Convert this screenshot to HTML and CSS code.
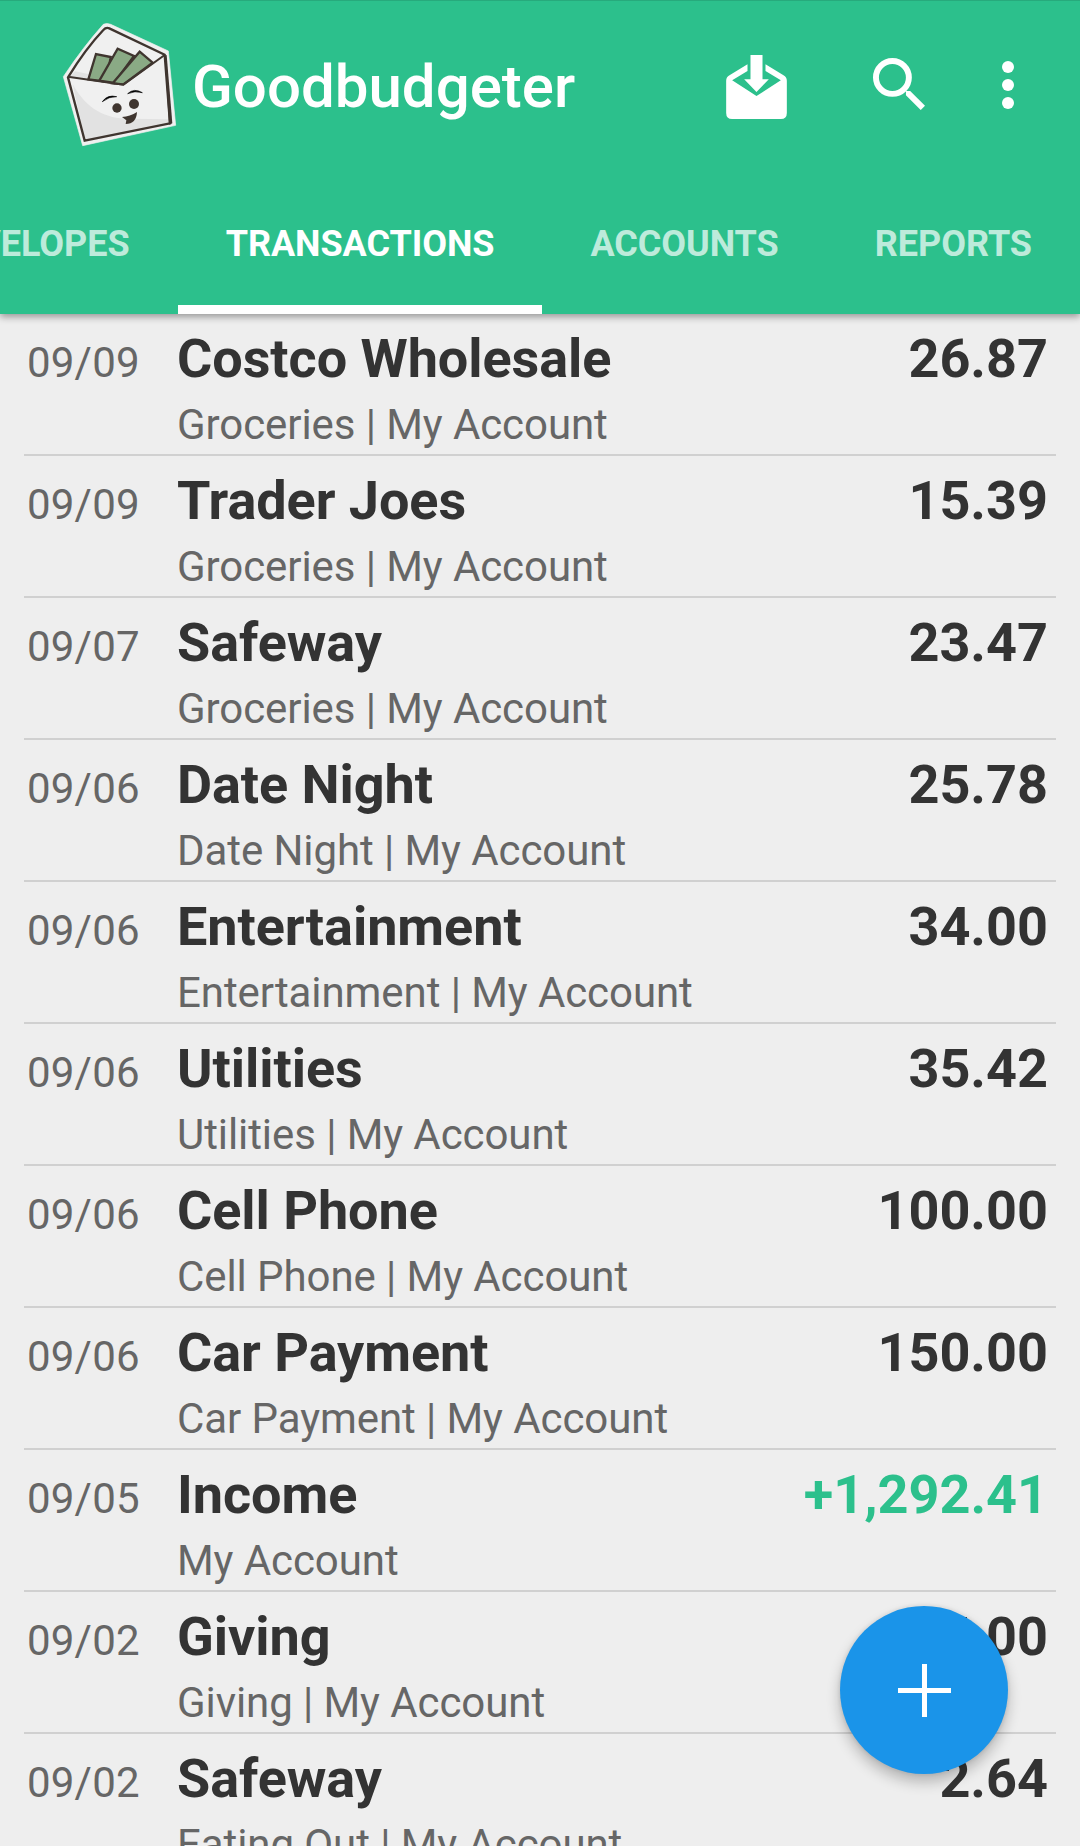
FILE: index.html
```html
<!DOCTYPE html>
<html lang="en">
<head>
  <meta charset="UTF-8">
  <title>Goodbudgeter</title>
  <link rel="stylesheet" href="styles.css">
</head>
<body>
  <header class="header">
    <div class="toolbar">
      <svg class="logo" viewBox="0 0 420 450">
        <path d="M160 43Q170 38 182 43L355 123L377 346L98 407L40 200Q100 110 160 43Z" fill="#f0f0f0" stroke="#f0f0f0" stroke-width="2"/>
        <path d="M75 184L115 192L112 206L58 202Z" fill="#e2e2e2"/>
        <path d="M68 222C110 300 170 326 235 326L360 328L360 340L105 390Z" fill="#e2e2e2"/>
        <g fill="#8aaa85" stroke="#3f352f" stroke-width="7">
          <path d="M115 208L138 132L182 141L170 215Z"/>
          <path d="M148 212L203 116L252 138L193 219Z"/>
          <path d="M188 220L269 125L308 158L220 223Z"/>
        </g>
        <path d="M54 200L220 224L344 135" fill="none" stroke="#3f352f" stroke-width="6"/>
        <path d="M54 202Q107 116 160 60Q168 51 178 55L344 134L360 340L104 392Z" fill="none" stroke="#3f352f" stroke-width="7"/>
        <path d="M344 137L350 135L367 340L357 344Z" fill="#3f352f"/>
        <path d="M157 275Q172 253 200 260Q177 259 157 275ZM233 251Q252 233 277 248Q255 241 233 251Z" fill="#000" stroke="#000" stroke-width="2"/>
        <circle cx="201" cy="294" r="14" fill="#3f352f"/>
        <circle cx="252" cy="282" r="15" fill="#3f352f"/>
        <path d="M216 321Q240 320 261 306Q259 342 227 342L229 331Z" fill="#3f352f"/>
      </svg>
      <h1>Goodbudgeter</h1>
      <svg class="icon-inbox" viewBox="0 0 182 192">
        <path fill="#fff" d="M73 0H109V73H128L91 111L54 73H73Z"/>
        <path fill="#fff" fill-rule="evenodd" d="M64 28L10 61Q0 67 0 77V174Q0 192 18 192H164Q182 192 182 174V77Q182 67 172 61L118 28V48L164 76L91 123L18 76L64 48Z"/>
      </svg>
      <svg class="icon-search" viewBox="0 0 158 158">
        <circle cx="59" cy="59" r="50" fill="none" stroke="#fff" stroke-width="18"/>
        <path d="M100 100H113L158 145L145 158L100 113Z" fill="#fff"/>
      </svg>
      <svg class="icon-more" viewBox="0 0 12 48">
        <circle cx="6" cy="6" r="6" fill="#fff"/>
        <circle cx="6" cy="24" r="6" fill="#fff"/>
        <circle cx="6" cy="42" r="6" fill="#fff"/>
      </svg>
    </div>
    <nav class="tabs">
      <a class="tab">ENVELOPES</a>
      <a class="tab active">TRANSACTIONS</a>
      <a class="tab">ACCOUNTS</a>
      <a class="tab">REPORTS</a>
    </nav>
  </header>

  <main class="list">
    <div class="row">
      <span class="date">09/09</span>
      <div class="info"><h2>Costco Wholesale</h2><p>Groceries | My Account</p></div>
      <span class="amount">26.87</span>
    </div>
    <div class="row">
      <span class="date">09/09</span>
      <div class="info"><h2>Trader Joes</h2><p>Groceries | My Account</p></div>
      <span class="amount">15.39</span>
    </div>
    <div class="row">
      <span class="date">09/07</span>
      <div class="info"><h2>Safeway</h2><p>Groceries | My Account</p></div>
      <span class="amount">23.47</span>
    </div>
    <div class="row">
      <span class="date">09/06</span>
      <div class="info"><h2>Date Night</h2><p>Date Night | My Account</p></div>
      <span class="amount">25.78</span>
    </div>
    <div class="row">
      <span class="date">09/06</span>
      <div class="info"><h2>Entertainment</h2><p>Entertainment | My Account</p></div>
      <span class="amount">34.00</span>
    </div>
    <div class="row">
      <span class="date">09/06</span>
      <div class="info"><h2>Utilities</h2><p>Utilities | My Account</p></div>
      <span class="amount">35.42</span>
    </div>
    <div class="row">
      <span class="date">09/06</span>
      <div class="info"><h2>Cell Phone</h2><p>Cell Phone | My Account</p></div>
      <span class="amount">100.00</span>
    </div>
    <div class="row">
      <span class="date">09/06</span>
      <div class="info"><h2>Car Payment</h2><p>Car Payment | My Account</p></div>
      <span class="amount">150.00</span>
    </div>
    <div class="row">
      <span class="date">09/05</span>
      <div class="info"><h2>Income</h2><p>My Account</p></div>
      <span class="amount income">+1,292.41</span>
    </div>
    <div class="row">
      <span class="date">09/02</span>
      <div class="info"><h2>Giving</h2><p>Giving | My Account</p></div>
      <span class="amount">5.00</span>
    </div>
    <div class="row">
      <span class="date">09/02</span>
      <div class="info"><h2>Safeway</h2><p>Eating Out | My Account</p></div>
      <span class="amount">2.64</span>
    </div>
  </main>

  <button class="fab" aria-label="Add transaction">
    <svg viewBox="0 0 53 53">
      <path d="M26.5 0V53M0 26.5H53" stroke="#fff" stroke-width="5"/>
    </svg>
  </button>
</body>
</html>
```
FILE: styles.css
```css
* {
  box-sizing: border-box;
}

body {
  margin: 0;
  height: 1846px;
  overflow: hidden;
  background: #eee;
  color: #333;
  font-family: Roboto, "Liberation Sans", sans-serif;
}

h1, h2, p {
  margin: 0;
}

.header {
  position: relative;
  height: 314px;
  background: #2cc08c;
  border-top: 1px solid #27aa7c;
  box-shadow: 0 3px 7px rgba(0, 0, 0, 0.36);
}

.toolbar {
  display: flex;
  height: 170px;
  padding-left: 50px;
}

.logo {
  width: 140px;
  height: 150px;
  margin-top: 9px;
}

.toolbar h1 {
  width: 536px;
  padding-left: 2px;
  margin-top: 51px;
  font-size: 60px;
  line-height: 70px;
  font-weight: 500;
  color: #fff;
}

.icon-inbox {
  width: 61px;
  height: 64px;
  margin-top: 54px;
}

.icon-search {
  width: 52px;
  height: 52px;
  margin: 57px 0 0 86px;
}

.icon-more {
  width: 12px;
  height: 48px;
  margin: 60px 0 0 77px;
}

/* Tabs overflow to the left, the list is scrolled to its end */
.tabs {
  display: flex;
  justify-content: flex-end;
  height: 143px;
}

.tab {
  flex: none;
  padding: 52px 48px 0;
  font-size: 36px;
  line-height: 42px;
  font-weight: 700;
  letter-spacing: -0.04px;
  color: rgba(255, 255, 255, 0.7);
}

.tab.active {
  color: #fff;
  border-bottom: 9px solid #fff;
}

.row {
  display: flex;
  align-items: baseline;
  height: 142px;
  margin: 0 24px;
  padding: 13px 8px 0 3px;
  border-bottom: 2px solid #d0d0d0;
}

.date {
  width: 150px;
  font-size: 42px;
  letter-spacing: 0.2px;
  color: #666;
}

.info {
  flex: 1;
}

.info h2 {
  font-size: 54px;
  line-height: 63px;
  font-weight: 700;
  letter-spacing: -0.06px;
}

.info p {
  margin-top: 10px;
  font-size: 42px;
  line-height: 49px;
  letter-spacing: -0.08px;
  color: #666;
  white-space: nowrap;
}

.amount {
  font-size: 54px;
  line-height: 63px;
  font-weight: 700;
}

.income {
  color: #2cc08c;
}

.fab {
  position: fixed;
  left: 840px;
  top: 1606px;
  display: flex;
  align-items: center;
  justify-content: center;
  width: 168px;
  height: 168px;
  padding: 0;
  border: none;
  border-radius: 50%;
  background: #1a94e9;
  box-shadow: 0 8px 14px rgba(0, 0, 0, 0.24), 0 0 5px rgba(0, 0, 0, 0.12);
}

.fab svg {
  width: 53px;
  height: 53px;
}
```
